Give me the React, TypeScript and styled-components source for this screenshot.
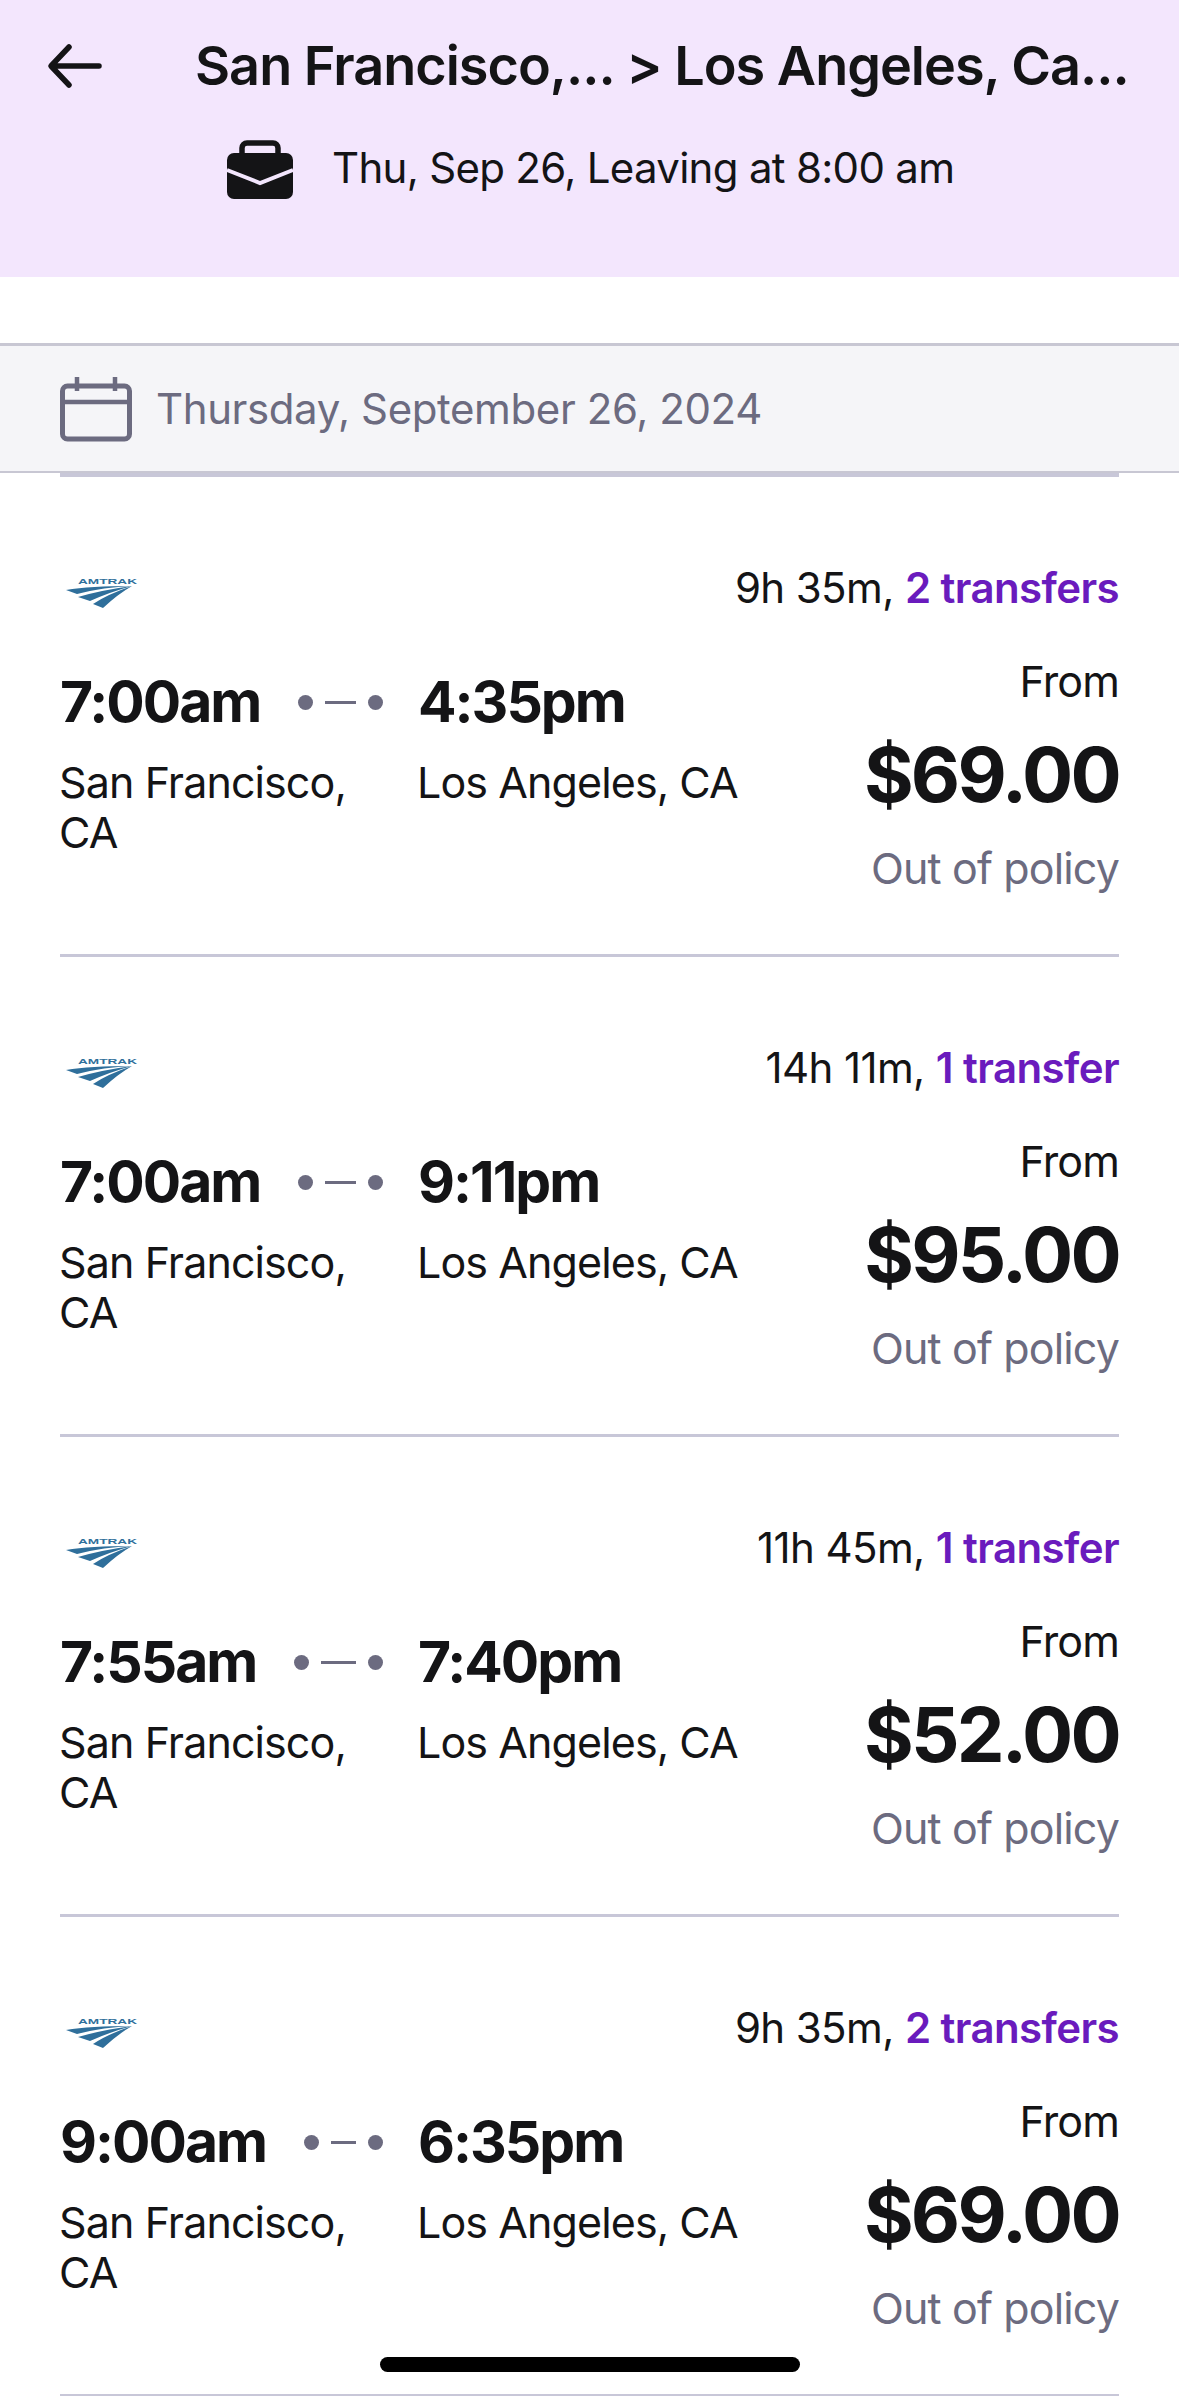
import React from 'react';
import styled, { createGlobalStyle } from 'styled-components';

const Global = createGlobalStyle`
    html, body {
        margin: 0;
        padding: 0;
        background: #fff;
    }
    * {
        box-sizing: border-box;
    }
`

const Page = styled.div`
    position: relative;
    width: 1179px;
    height: 2396px;
    overflow: hidden;
    background: #fff;
    color: #141416;
    font-family: Inter, "Liberation Sans", Arial, sans-serif;
`

const Header = styled.header`
    height: 277px;
    background: #f3e6fd;
    padding: 33px 0 0 47px;
`

const TitleRow = styled.div`
    display: flex;
    align-items: center;
    height: 66px;
`

const BackIcon = styled.svg`
    width: 56px;
    height: 48px;
    flex: none;
`

const Title = styled.h1`
    margin: 0 0 0 92px;
    font-size: 54px;
    line-height: 66px;
    font-weight: 600;
    white-space: nowrap;
    letter-spacing: -1px;
`

const TripRow = styled.div`
    display: flex;
    align-items: center;
    height: 66px;
    margin-top: 36px;
    padding-left: 179px;
`

const CaseIcon = styled.svg`
    width: 68px;
    height: 60px;
    flex: none;
    margin-top: 4px;
`

const TripText = styled.span`
    margin-left: 38px;
    font-size: 42px;
    line-height: 50px;
    white-space: nowrap;
    letter-spacing: -0.7px;
`

const Spacer = styled.div`
    height: 66px;
`

const DateBar = styled.div`
    display: flex;
    align-items: center;
    height: 130px;
    padding-left: 60px;
    background: #f5f5f8;
    border-top: 3px solid #c8c7d3;
    border-bottom: 2px solid #c8c7d3;
`

const CalendarIcon = styled.svg`
    width: 72px;
    height: 66px;
    flex: none;
`

const DateText = styled.span`
    margin-left: 24px;
    font-size: 42px;
    line-height: 50px;
    letter-spacing: -0.4px;
    color: #6c6b80;
`

const List = styled.div`
    margin: 0 60px;
    border-top: 4px solid #c8c7d8;
`

const Row = styled.article`
    height: 480px;
    padding-top: 86px;
    border-bottom: 3px solid #c8c7d8;
`

const RowTop = styled.div`
    display: flex;
    align-items: center;
    justify-content: space-between;
    height: 50px;
`

const Logo = styled.svg`
    width: 80px;
    height: 40px;
    flex: none;
    margin-top: 10px;
`

const Duration = styled.div`
    font-size: 42px;
    line-height: 50px;
    letter-spacing: -0.6px;
    white-space: nowrap;
`

const Transfers = styled.span`
    color: #6a1bbd;
    font-weight: 600;
`

const RowBody = styled.div`
    display: flex;
    justify-content: space-between;
    margin-top: 43px;
`

const Legs = styled.div`
    display: grid;
    grid-template-columns: 358px 330px;
    padding-top: 11px;
`

const Leg = styled.div`
    display: flex;
    flex-direction: column;
    gap: 20px;
`

const TimeLine = styled.div`
    display: flex;
    align-items: center;
    height: 70px;
`

const Time = styled.span`
    font-size: 57px;
    line-height: 70px;
    font-weight: 700;
    letter-spacing: -2px;
    white-space: nowrap;
`

const Route = styled.div`
    display: flex;
    align-items: center;
    flex: 1;
    gap: 12px;
    margin: 0 35px 0 38px;
`

const Dot = styled.i`
    width: 15px;
    height: 15px;
    flex: none;
    border-radius: 50%;
    background: #6c6b80;
`

const Dash = styled.i`
    height: 3px;
    flex: 1;
    background: #6c6b80;
`

const Place = styled.div<{ $narrow?: boolean }>`
    width: ${p => (p.$narrow ? '310px' : '330px')};
    margin-left: -1px;
    font-size: 43px;
    line-height: 50px;
    letter-spacing: -0.9px;
`

const Fare = styled.div`
    display: flex;
    flex-direction: column;
    align-items: flex-end;
`

const From = styled.div`
    font-size: 43px;
    line-height: 50px;
    letter-spacing: -0.9px;
`

const Price = styled.div`
    margin-top: 23px;
    font-size: 76px;
    line-height: 90px;
    font-weight: 700;
    letter-spacing: -2.8px;
`

const Policy = styled.div`
    margin-top: 24px;
    font-size: 43px;
    line-height: 50px;
    letter-spacing: -0.85px;
    color: #6c6b80;
`

const HomeBar = styled.div`
    position: absolute;
    left: 380px;
    top: 2357px;
    width: 420px;
    height: 15px;
    border-radius: 8px;
    background: #000;
`

const AmtrakLogo = () => (
    <Logo viewBox="0 0 80 40">
        <text
            x="18"
            y="11"
            fontFamily="Liberation Sans, Arial, sans-serif"
            fontSize="7"
            fontWeight="700"
            fill="#2f6f9b"
            textLength="59"
            lengthAdjust="spacingAndGlyphs"
        >
            AMTRAK
        </text>
        <path d="M6 17Q30 13 72 13Q44 14 17 21Z" fill="#2f6f9b" />
        <path d="M18 24Q42 17 72 13Q50 19 30 28Z" fill="#2f6f9b" />
        <path d="M33 31Q48 21 72 13Q58 21 43 35Z" fill="#2f6f9b" />
    </Logo>
)

const trips = [
    { depart: '7:00am', arrive: '4:35pm', total: '9h 35m,', stops: '2 transfers', price: '$69.00' },
    { depart: '7:00am', arrive: '9:11pm', total: '14h 11m,', stops: '1 transfer', price: '$95.00' },
    { depart: '7:55am', arrive: '7:40pm', total: '11h 45m,', stops: '1 transfer', price: '$52.00' },
    { depart: '9:00am', arrive: '6:35pm', total: '9h 35m,', stops: '2 transfers', price: '$69.00' },
]

const App = () => {
    return (
        <Page>
            <Global />
            <Header>
                <TitleRow>
                    <BackIcon viewBox="0 0 56 48">
                        <path
                            d="M52 24H5M22 5 4 24l18 19"
                            fill="none"
                            stroke="#141416"
                            strokeWidth="5.5"
                            strokeLinecap="round"
                            strokeLinejoin="round"
                        />
                    </BackIcon>
                    <Title>San Francisco,... &gt; Los Angeles, Ca...</Title>
                </TitleRow>
                <TripRow>
                    <CaseIcon viewBox="0 0 68 60">
                        <path
                            d="M16 14V8a5 5 0 0 1 5-5h26a5 5 0 0 1 5 5v6"
                            fill="none"
                            stroke="#141416"
                            strokeWidth="5.5"
                        />
                        <rect x="1" y="13" width="66" height="46" rx="7" fill="#141416" />
                        <path d="M1 30 34 43 67 30" fill="none" stroke="#f3e6fd" strokeWidth="4" />
                    </CaseIcon>
                    <TripText>Thu, Sep 26, Leaving at 8:00 am</TripText>
                </TripRow>
            </Header>
            <Spacer />
            <DateBar>
                <CalendarIcon viewBox="0 0 72 66">
                    <rect x="2.5" y="10" width="67" height="53" rx="5" fill="none" stroke="#6c6b80" strokeWidth="5" />
                    <path d="M2 26H70M17 1V15M55 1V15" fill="none" stroke="#6c6b80" strokeWidth="4.5" />
                </CalendarIcon>
                <DateText>Thursday, September 26, 2024</DateText>
            </DateBar>
            <List>
                {trips.map((trip, i) => (
                    <Row key={i}>
                        <RowTop>
                            <AmtrakLogo />
                            <Duration>
                                {trip.total} <Transfers>{trip.stops}</Transfers>
                            </Duration>
                        </RowTop>
                        <RowBody>
                            <Legs>
                                <Leg>
                                    <TimeLine>
                                        <Time>{trip.depart}</Time>
                                        <Route>
                                            <Dot />
                                            <Dash />
                                            <Dot />
                                        </Route>
                                    </TimeLine>
                                    <Place $narrow>San Francisco, CA</Place>
                                </Leg>
                                <Leg>
                                    <TimeLine>
                                        <Time>{trip.arrive}</Time>
                                    </TimeLine>
                                    <Place>Los Angeles, CA</Place>
                                </Leg>
                            </Legs>
                            <Fare>
                                <From>From</From>
                                <Price>{trip.price}</Price>
                                <Policy>Out of policy</Policy>
                            </Fare>
                        </RowBody>
                    </Row>
                ))}
            </List>
            <HomeBar />
        </Page>
    );
};

export default App;
